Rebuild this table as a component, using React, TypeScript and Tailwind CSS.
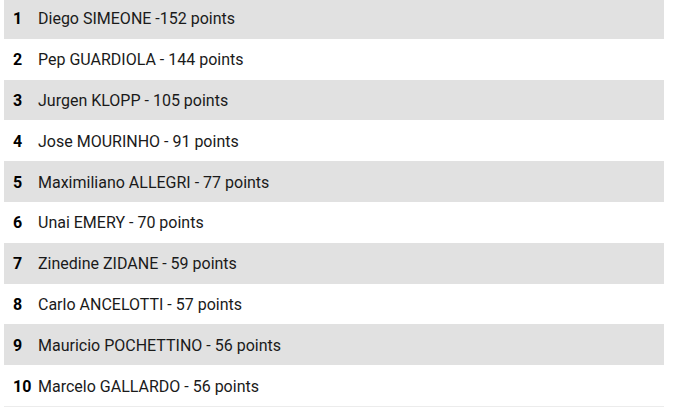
const coaches = [
  { rank: 1, text: "Diego SIMEONE -152 points" },
  { rank: 2, text: "Pep GUARDIOLA - 144 points" },
  { rank: 3, text: "Jurgen KLOPP - 105 points" },
  { rank: 4, text: "Jose MOURINHO - 91 points" },
  { rank: 5, text: "Maximiliano ALLEGRI - 77 points" },
  { rank: 6, text: "Unai EMERY - 70 points" },
  { rank: 7, text: "Zinedine ZIDANE - 59 points" },
  { rank: 8, text: "Carlo ANCELOTTI - 57 points" },
  { rank: 9, text: "Mauricio POCHETTINO - 56 points" },
  { rank: 10, text: "Marcelo GALLARDO - 56 points" },
];

export default function App() {
  return (
    <div className="h-[409px] w-[685px] overflow-hidden bg-white font-['Roboto',sans-serif] text-[16px] text-[#1a1a1a]">
      <ol className="ml-[4px] mt-[-2px] w-[660px]">
        {coaches.map((c) => (
          <li
            key={c.rank}
            className={
              c.rank % 2 === 1
                ? "flex h-[40.8px] items-center pt-[2px] bg-[#e1e1e1]"
                : "flex h-[40.8px] items-center pt-[2px] bg-white"
            }
          >
            <span className="w-[34px] pl-[9px] font-bold text-black">{c.rank}</span>
            <span>{c.text}</span>
          </li>
        ))}
        <li className="h-[1px] bg-[#ececec]" />
      </ol>
    </div>
  );
}
